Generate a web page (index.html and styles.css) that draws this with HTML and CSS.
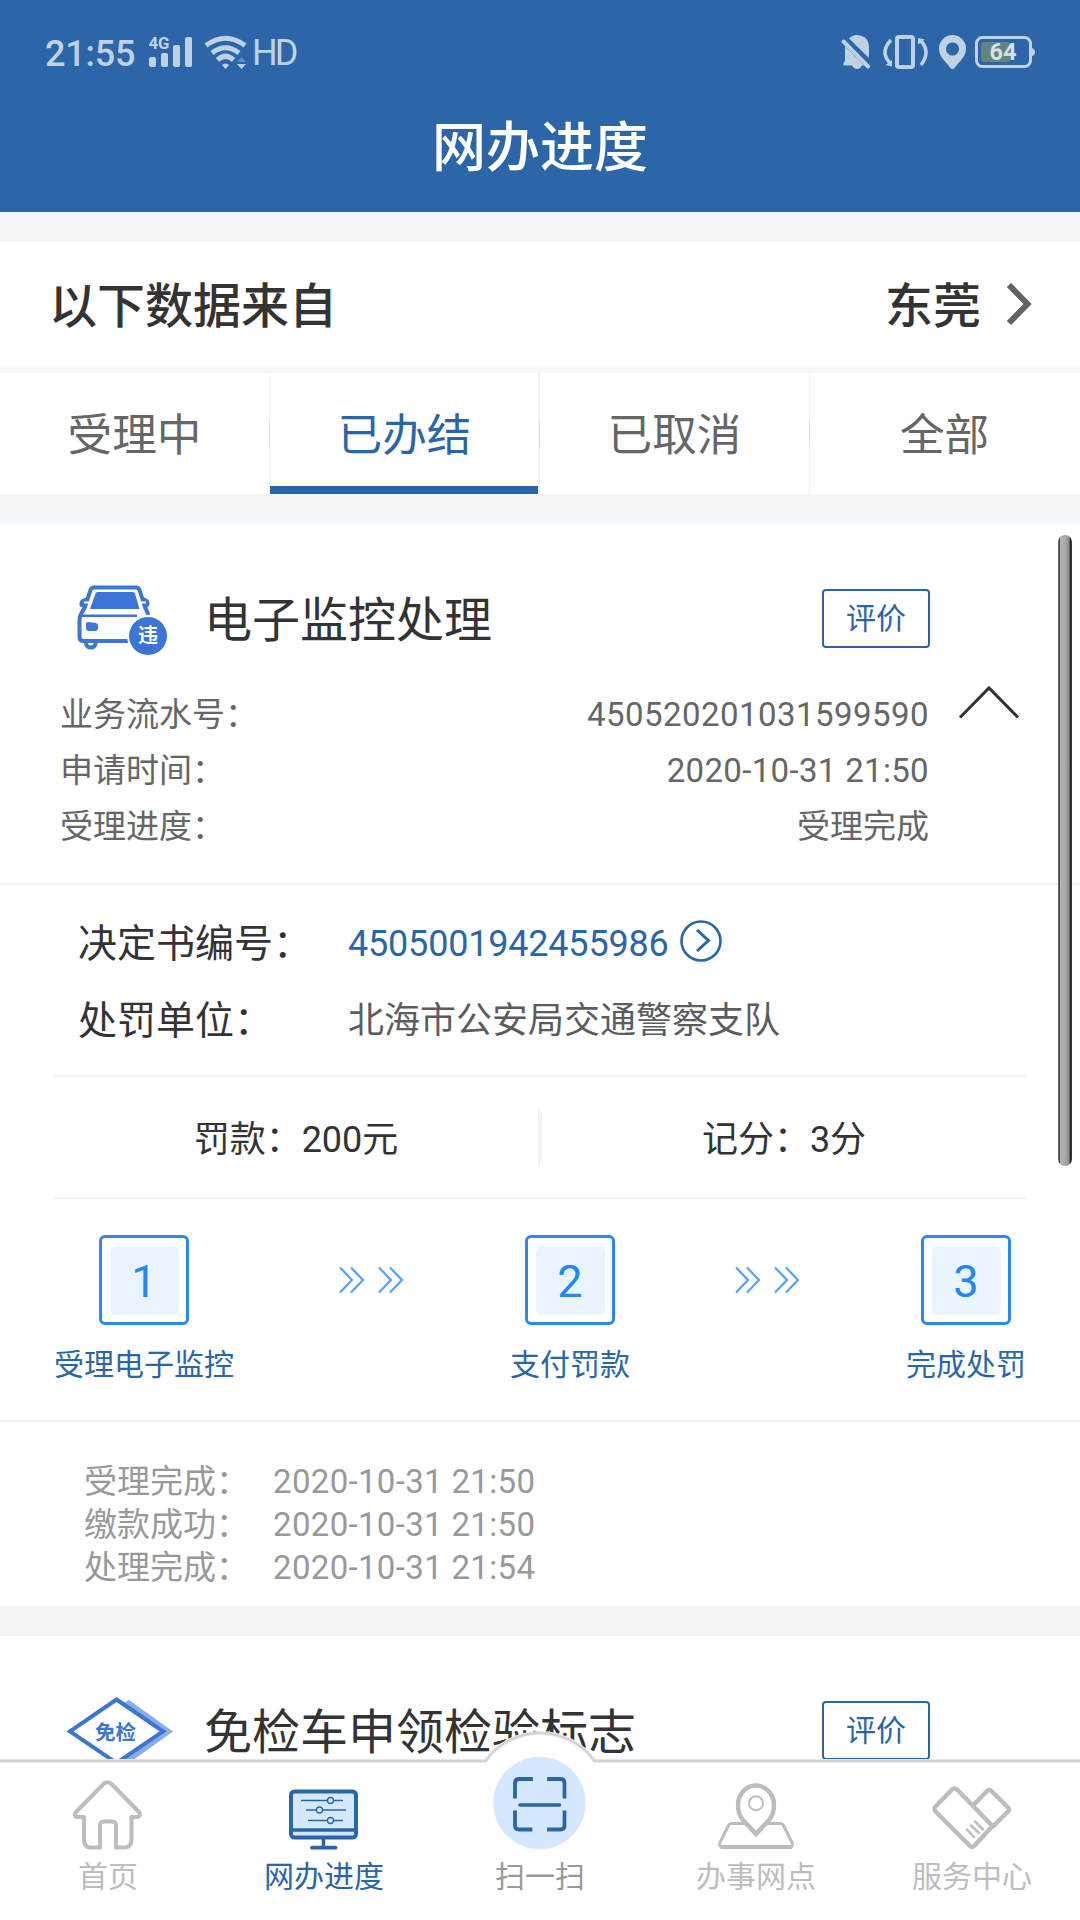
FILE: index.html
```html
<!DOCTYPE html>
<html lang="zh-CN">
<head>
<meta charset="utf-8">
<title>网办进度</title>
<link rel="stylesheet" href="styles.css">
</head>
<body>
<div class="app">
  <header class="header">
    <div class="status">
      <div class="status-left">
        <span class="clock">21:55</span>
        <svg class="signal" width="44" height="34" viewBox="149 35 44 34">
          <text class="net-label" x="148.5" y="49" textLength="21" lengthAdjust="spacingAndGlyphs">4G</text>
          <rect x="149" y="57" width="7" height="10" rx="2"/>
          <rect x="161" y="53" width="7" height="14" rx="2"/>
          <rect x="173" y="45" width="7" height="22" rx="2"/>
          <rect x="185" y="37" width="7" height="30" rx="2"/>
        </svg>
        <svg class="wifi" width="43" height="34" viewBox="204 35 43 34">
          <g fill="none" stroke="currentColor" stroke-width="5">
            <path d="M206 45.500Q225.500 31 245 45.500"/>
            <path d="M212 53Q225.500 42.500 239 53"/>
            <path d="M217.500 60Q225.500 52.500 233.500 60"/>
          </g>
          <path d="M222 65q3.500-3 7 0l-3.500 4z"/>
          <path d="M237 62l4.500-5 4.500 5z" opacity=".35"/>
          <path d="M237 64h9l-4.500 5z"/>
        </svg>
        <span class="hd">HD</span>
      </div>
      <svg class="status-right" width="196" height="36" viewBox="841 34 196 36">
        <path d="M849 38.500Q852 35 857 35Q869 36 869 48V58z"/>
        <path d="M845 46L864 65.500H862Q860 69 857 69Q854 69 852 65.500H844Q842 64 845 61z"/>
        <path d="M843.500 41.500L868 66.500" fill="none" stroke="currentColor" stroke-width="4" stroke-linecap="round"/>
        <g fill="none" stroke="currentColor">
          <rect x="897" y="37" width="16" height="30" rx="2" stroke-width="4"/>
          <path d="M891 40Q879.500 52 890 63" stroke-width="3.500"/>
          <path d="M921 65Q931 52 921 41" stroke-width="3.500"/>
        </g>
        <path d="M892 60v6.500l-6.500-1.500zM918 38l7 1.500-7 5z"/>
        <path fill-rule="evenodd" d="M952.500 35a13.500 13.500 0 0 1 13.500 14c0 8-8 14-11 18.500q-2.500 3-5 0C947 63 939 57 939 49a13.500 13.500 0 0 1 13.500-14zm0 7.500a6.500 6.500 0 1 0 .01 0z"/>
        <rect x="976.500" y="37.500" width="54" height="29" rx="6" fill="none" stroke="currentColor" stroke-width="3"/>
        <path d="M1032 48q3 1 3 4t-3 4z"/>
        <rect x="981" y="42" width="29" height="20" rx="3" fill="#62857c"/>
        <text class="battery-label" x="989.5" y="60" textLength="27" lengthAdjust="spacingAndGlyphs">64</text>
      </svg>
    </div>
    <h1 class="page-title">网办进度</h1>
  </header>

  <div class="source">
    <span class="source-text">以下数据来自</span>
    <span class="source-city"><span class="source-text">东莞</span>
      <svg width="26" height="44" viewBox="0 0 26 44"><path d="M3 2L21.500 21L3 40" fill="none" stroke="#626262" stroke-width="6"/></svg>
    </span>
  </div>

  <nav class="tabs">
    <div class="tab">受理中</div>
    <div class="tab tab-active">已办结</div>
    <div class="tab">已取消</div>
    <div class="tab">全部</div>
  </nav>

  <main class="list">
    <section class="card">
      <div class="card-head">
        <svg class="card-icon" width="106" height="76" viewBox="67 581 106 76">
          <g fill="none" stroke="#3b76d6" stroke-width="4" stroke-linejoin="round">
            <path d="M148.500 615L145 607L139.500 590Q138.500 587.500 136 587.500H94Q91.500 587.500 90.500 590L85 607L81 614Q79.500 617 79.500 620V637Q79.500 641 83.500 641H129"/>
            <path d="M82 615.700H137" stroke-width="2.500"/>
            <path d="M86 641V643a4.800 4.500 0 0 0 9.600 0V641"/>
          </g>
          <path d="M88 597.500Q80 598 79.500 603T84 607zM142 597.500Q149.500 598 149.500 603T145.500 607z" fill="#3b76d6"/>
          <path d="M84 602.500H89M141 602.500H146" stroke="#fff" stroke-width="2"/>
          <path d="M97 592H133Q134.500 592 135 593.500L139.500 609H90L95.500 593.500Q96 592 97 592z" fill="#3b76d6"/>
          <path d="M88 622L96 623Q98 623.500 98 626V628Q98 631 95 631H89Q86 631 86 628V624Q86 622 88 622z" fill="#3b76d6"/>
          <circle cx="148" cy="636" r="21" fill="#fff"/>
          <circle cx="148" cy="636" r="19" fill="#3b76d6"/>
          <text class="car-label" x="148" y="643" text-anchor="middle">违</text>
        </svg>
        <h2 class="card-title">电子监控处理</h2>
        <button class="rate">评价</button>
      </div>
      <div class="info">
        <dl class="info-rows">
          <div class="info-row"><dt>业务流水号：</dt><dd class="serial">450520201031599590</dd></div>
          <div class="info-row"><dt>申请时间：</dt><dd class="time">2020-10-31 21:50</dd></div>
          <div class="info-row"><dt>受理进度：</dt><dd>受理完成</dd></div>
        </dl>
        <svg class="collapse" width="62" height="36" viewBox="0 0 62 36"><path d="M2 33.500L31 4L60 33.500" fill="none" stroke="#333" stroke-width="3"/></svg>
      </div>

      <div class="decision">
        <div class="decision-row">
          <span class="decision-label">决定书编号：</span>
          <a class="decision-link">4505001942455986
            <svg class="decision-go" width="42" height="42" viewBox="0 0 42 42" fill="none" stroke="#2b65a9"><circle cx="21" cy="21" r="19.500" stroke-width="2.600"/><path d="M17 10L28.500 20.500L17 31" stroke-width="3"/></svg>
          </a>
        </div>
        <div class="decision-row">
          <span class="decision-label">处罚单位：</span>
          <span class="decision-value">北海市公安局交通警察支队</span>
        </div>
      </div>

      <div class="penalty">
        <div class="penalty-cell penalty-fine">罚款：200元</div>
        <div class="penalty-cell penalty-points">记分：3分</div>
      </div>

      <div class="steps">
        <div class="step"><div class="step-box"><span class="step-num">1</span></div><div class="step-label">受理电子监控</div></div>
        <svg class="arrows" width="66" height="28" viewBox="0 0 66 28" fill="none" stroke="#55a0fb" stroke-width="2.200"><path d="M1 1.500L13 14L1 26.500M12 1.500L24 14L12 26.500M40 1.500L52 14L40 26.500M51 1.500L63 14L51 26.500"/></svg>
        <div class="step"><div class="step-box"><span class="step-num">2</span></div><div class="step-label">支付罚款</div></div>
        <svg class="arrows" width="66" height="28" viewBox="0 0 66 28" fill="none" stroke="#55a0fb" stroke-width="2.200"><path d="M1 1.500L13 14L1 26.500M12 1.500L24 14L12 26.500M40 1.500L52 14L40 26.500M51 1.500L63 14L51 26.500"/></svg>
        <div class="step"><div class="step-box"><span class="step-num">3</span></div><div class="step-label">完成处罚</div></div>
      </div>

      <div class="log">
        <div class="log-row"><span class="log-label">受理完成：</span><span class="time">2020-10-31 21:50</span></div>
        <div class="log-row"><span class="log-label">缴款成功：</span><span class="time">2020-10-31 21:50</span></div>
        <div class="log-row"><span class="log-label">处理完成：</span><span class="time">2020-10-31 21:54</span></div>
      </div>
    </section>

    <section class="card">
      <div class="card-head">
        <svg class="card-icon" width="106" height="76" viewBox="67 1693 106 76">
          <path d="M129 1700L173 1731.500L129 1763L118 1757L154 1731L124 1703z" fill="#8aaee6"/>
          <path d="M116.500 1699.500L163 1731.300L116.500 1763L70 1731.300z" fill="#fff" stroke="#3b76d6" stroke-width="4"/>
          <text class="free-label" x="115.500" y="1740" text-anchor="middle">免检</text>
        </svg>
        <h2 class="card-title">免检车申领检验标志</h2>
        <button class="rate">评价</button>
      </div>
    </section>
    <div class="scrollbar"></div>
  </main>

  <footer class="dock">
    <svg class="dock-edge" width="1080" height="35" viewBox="0 1730 1080 35">
      <path d="M-5 1761H485.500A67 67 0 0 1 594.500 1761H1085V1770H-5z" fill="#fff"/>
      <g fill="none">
        <path d="M-5 1761H485.500A67 67 0 0 1 594.500 1761H1085" stroke="#eee" stroke-width="4"/>
        <path d="M-5 1761H485.500A67 67 0 0 1 594.500 1761H1085" stroke="#d3d3d3" stroke-width="2.400"/>
      </g>
    </svg>
    <div class="dock-item">
      <svg width="70" height="70" viewBox="73 1779.500 70 70" fill="none" stroke="#bdbdbd" stroke-width="4" stroke-linejoin="round">
        <path d="M104 1783Q107.500 1780.500 111 1783L139 1811.500Q141.500 1816 137.500 1816.500H131.500V1839Q131.500 1847 124 1847H116V1825Q116 1821 112 1821H104Q100 1821 100 1825V1847H91Q84 1847 84 1839V1816.500H77Q73.500 1816 76 1811.500z"/>
      </svg>
      <span>首页</span>
    </div>
    <div class="dock-item dock-current">
      <svg width="70" height="61" viewBox="289 1788.500 70 61" fill="none" stroke="#2b65a9">
        <rect x="291" y="1791" width="65" height="46" rx="3.500" fill="#d6e8ff" stroke-width="4"/>
        <path d="M291 1829.500H356M323.500 1838V1848" stroke-width="3.500"/>
        <path d="M312 1847.200H335.500" stroke-width="3.800" stroke-linecap="round"/>
        <path d="M301 1800H343M306 1809.500H346M308 1820H343" stroke-width="1.300"/>
        <g fill="#d6e8ff" stroke-width="1.300"><circle cx="330.500" cy="1800" r="3"/><circle cx="319.500" cy="1809.500" r="3"/><circle cx="330.500" cy="1820" r="3"/></g>
      </svg>
      <span>网办进度</span>
    </div>
    <div class="dock-item dock-scan">
      <svg width="94" height="94" viewBox="493 1755.500 94 94" fill="none" stroke="#2b65a9" stroke-width="3.800" stroke-linecap="square">
        <circle cx="539.500" cy="1802.500" r="46.200" fill="#d6e8ff" stroke="none"/>
        <path d="M531 1778.500H519Q515 1778.500 515 1782.500V1796M549 1778.500H560.500Q564.500 1778.500 564.500 1782.500V1796M515 1812V1825Q515 1829 519 1829H530.500M549 1829H560.500Q564.500 1829 564.500 1825V1812"/>
        <path d="M520 1804.500H559.500" stroke-width="3.500" stroke-linecap="round"/>
      </svg>
      <span>扫一扫</span>
    </div>
    <div class="dock-item">
      <svg width="78" height="68" viewBox="717.500 1781.500 78 68" fill="none" stroke="#bdbdbd" stroke-linejoin="round">
        <path d="M732 1823H781Q783 1823 784 1825L792.500 1842Q794 1846.500 790 1846.500H723.500Q719 1846.500 720.500 1842L729 1825Q730 1823 732 1823z" stroke-width="3"/>
        <path d="M721 1846.500H792.500" stroke-width="4"/>
        <path d="M756.500 1833.500L743.500 1819.500C740 1815.500 738.500 1811 738.500 1804.500A18 19.500 0 0 1 774.500 1804.500C774.500 1811 773 1815.500 769.500 1819.500z" fill="#fff" stroke-width="4.500" stroke-linejoin="miter"/>
        <circle cx="756.500" cy="1802.700" r="7" stroke-width="2"/>
      </svg>
      <span>办事网点</span>
    </div>
    <div class="dock-item">
      <svg width="80" height="64" viewBox="932 1785.500 80 64" fill="none" stroke="#bdbdbd" stroke-width="4.500" stroke-linejoin="round" stroke-linecap="round">
        <path d="M952 1789Q954.500 1787 957 1789L992.500 1825.500L974 1845.500Q972 1847.500 970 1845.500L935.500 1811Q933.500 1808.500 935.500 1806z"/>
        <path d="M973.500 1804.500L987 1790.500Q989 1788.500 991.500 1790.500L1008 1807Q1010 1809 1008 1811L993.500 1825.500"/>
        <path d="M967 1829L974 1836.500M971 1825L979 1832.500M975 1821L983 1829" stroke-width="2.500"/>
      </svg>
      <span>服务中心</span>
    </div>
  </footer>
</div>
</body>
</html>
```

FILE: styles.css
```css
* { box-sizing: border-box; margin: 0; padding: 0; }

body {
  font-family: Roboto, "Noto Sans CJK SC", sans-serif;
  color: #333;
  background: #f4f8fa;
}

svg { display: block; flex: none; }

.app {
  width: 1080px;
  height: 1920px;
  display: flex;
  flex-direction: column;
  overflow: hidden;
}

/* header */
.header { height: 212px; flex: none; background: #2c66a9; color: #fff; }
.status {
  height: 104px;
  padding: 0 43px 0 45px;
  display: flex;
  justify-content: space-between;
  align-items: center;
  color: #bfd1e5;
  fill: currentColor;
}
.status-left { display: flex; align-items: center; }
.clock { width: 104px; padding-top: 3px; font-size: 36px; font-weight: 500; line-height: 36px; letter-spacing: -.25px; white-space: nowrap; }
.signal { margin-right: 11px; }
.wifi { margin-right: 5px; }
.hd { padding-top: 1px; font-size: 36px; line-height: 36px; letter-spacing: -3px; }
.net-label { font: 700 16px Roboto, sans-serif; }
.battery-label { font: 700 24px Roboto, sans-serif; fill: #d6e1e6; }
.page-title { font-size: 54px; font-weight: 500; line-height: 90px; text-align: center; }

/* data source */
.source {
  height: 125px;
  flex: none;
  margin-top: 30px;
  padding: 0 48px 0 49px;
  display: flex;
  justify-content: space-between;
  align-items: center;
  background: #fff;
  font-size: 48px;
  font-weight: 500;
  line-height: 60px;
}
.source-text { padding-top: 4px; }
.source-city { display: flex; align-items: center; gap: 25px; }

/* filter tabs */
.tabs {
  height: 121px;
  flex: none;
  margin: 6px 0 30px;
  display: grid;
  grid-template-columns: repeat(4, 1fr);
}
.tab {
  display: flex;
  align-items: center;
  justify-content: center;
  padding: 4px 1px 0 0;
  font-size: 44.600px;
  line-height: 60px;
  color: #666;
  background:
    linear-gradient(#ddd, #ddd) right 48px / 1px 25px no-repeat,
    linear-gradient(#f5f5f5, #f5f5f5) right 0 / 1px 100% no-repeat,
    #fff;
}
.tab:last-child { background: #fff; }
.tab-active {
  color: #2b65a9;
  background:
    linear-gradient(#ddd, #ddd) right 48px / 1px 25px no-repeat,
    linear-gradient(#f5f5f5, #f5f5f5) right 0 / 2px 100% no-repeat,
    linear-gradient(#2b65a9, #2b65a9) left bottom / 100% 8.500px no-repeat,
    #fff;
}

/* cards */
.list { position: relative; flex: 1; min-height: 0; overflow: hidden; background: #f3f3f8; }
.card { margin-bottom: 30px; background: #fff; }
.card-head { display: flex; align-items: flex-start; height: 133px; padding: 57px 150px 0 67px; }
.card-title { flex: 1; margin-left: 31px; font-size: 48px; font-weight: 400; line-height: 80px; white-space: nowrap; }
.rate {
  width: 108px;
  height: 59px;
  margin-top: 8px;
  border: 2px solid #2b65a9;
  border-radius: 4px;
  background: #fff;
  color: #2b65a9;
  font: 400 30px/56px Roboto, "Noto Sans CJK SC", sans-serif;
}

.info { display: flex; height: 228px; padding: 30px 60px 0 60px; border-bottom: 2px solid #f2f2f2; }
.info-rows { width: 871px; color: #666; font-size: 33px; line-height: 56px; }
.info-row { display: flex; justify-content: space-between; }
.serial { letter-spacing: .45px; }
.time { letter-spacing: .33px; }
.collapse { margin: -3px 0 0 29px; }

.decision { margin: 0 54px; height: 192px; padding: 20px 0 0 24px; border-bottom: 2px solid #f2f2f2; }
.decision-row { display: flex; align-items: center; height: 77px; font-size: 36px; line-height: 56px; }
.decision-label { width: 270px; font-size: 39px; }
.decision-link { display: flex; align-items: center; gap: 11px; color: #2b65a9; letter-spacing: -.2px; }
.decision-go { margin-bottom: 5px; }
.decision-value { color: #5c5c5c; }

.penalty { display: flex; align-items: center; margin: 0 54px; height: 122px; border-bottom: 2px solid #f2f2f2; }
.penalty-cell { flex: 1; display: flex; align-items: center; justify-content: center; padding-bottom: 3px; font-size: 36px; }
.penalty-fine { height: 60px; border-right: 2px solid #f2f2f2; }
.penalty-points { height: 48px; border-left: 2px solid #f2f2f2; }

.steps { display: flex; justify-content: space-between; padding: 36px 54px 0; height: 223px; border-bottom: 2px solid #f2f2f2; }
.step { display: flex; flex-direction: column; align-items: center; gap: 18px; }
.step-box { width: 90px; height: 90px; padding: 7.500px; border: 3px solid #2b87f7; border-radius: 6px; }
.step-num {
  display: block;
  height: 69px;
  border-radius: 6px;
  background: #e9f4ff;
  color: #2188fb;
  font-size: 45px;
  line-height: 71px;
  text-align: center;
}
.step-label { font-size: 30px; line-height: 44px; color: #2b65a9; }
.arrows { margin-top: 31px; }

.log { height: 184px; padding: 38px 84px 0; color: #999; font-size: 33px; line-height: 43px; }
.log-row { display: flex; }
.log-label { width: 189px; }

.car-label { font: 700 20px "Noto Sans CJK SC", sans-serif; fill: #fff; }
.free-label { font: 700 20.500px "Noto Sans CJK SC", sans-serif; fill: #3b76d6; }

.scrollbar {
  position: absolute;
  top: 11px;
  right: 8px;
  width: 14px;
  height: 631px;
  border-radius: 7px;
  background: linear-gradient(90deg, #777 0, #444 1.500px, #b4b4b4 2.500px, #a6a6a6 8px, #8c8c8c 11px, #222 12.500px, #444 14px);
}

/* bottom dock */
.dock {
  position: relative;
  height: 161px;
  flex: none;
  display: grid;
  grid-template-columns: repeat(5, 1fr);
  background: #fff;
}
.dock-edge { position: absolute; left: 0; top: -29px; }
.dock-item {
  position: relative;
  min-height: 0;
  display: flex;
  flex-direction: column;
  justify-content: flex-end;
  align-items: center;
  gap: 9px;
  padding-bottom: 25px;
  font-size: 30px;
  line-height: 36px;
  color: #bdbdbd;
}
.dock-current { color: #2b65a9; }
.dock-scan { color: #999; }
```
